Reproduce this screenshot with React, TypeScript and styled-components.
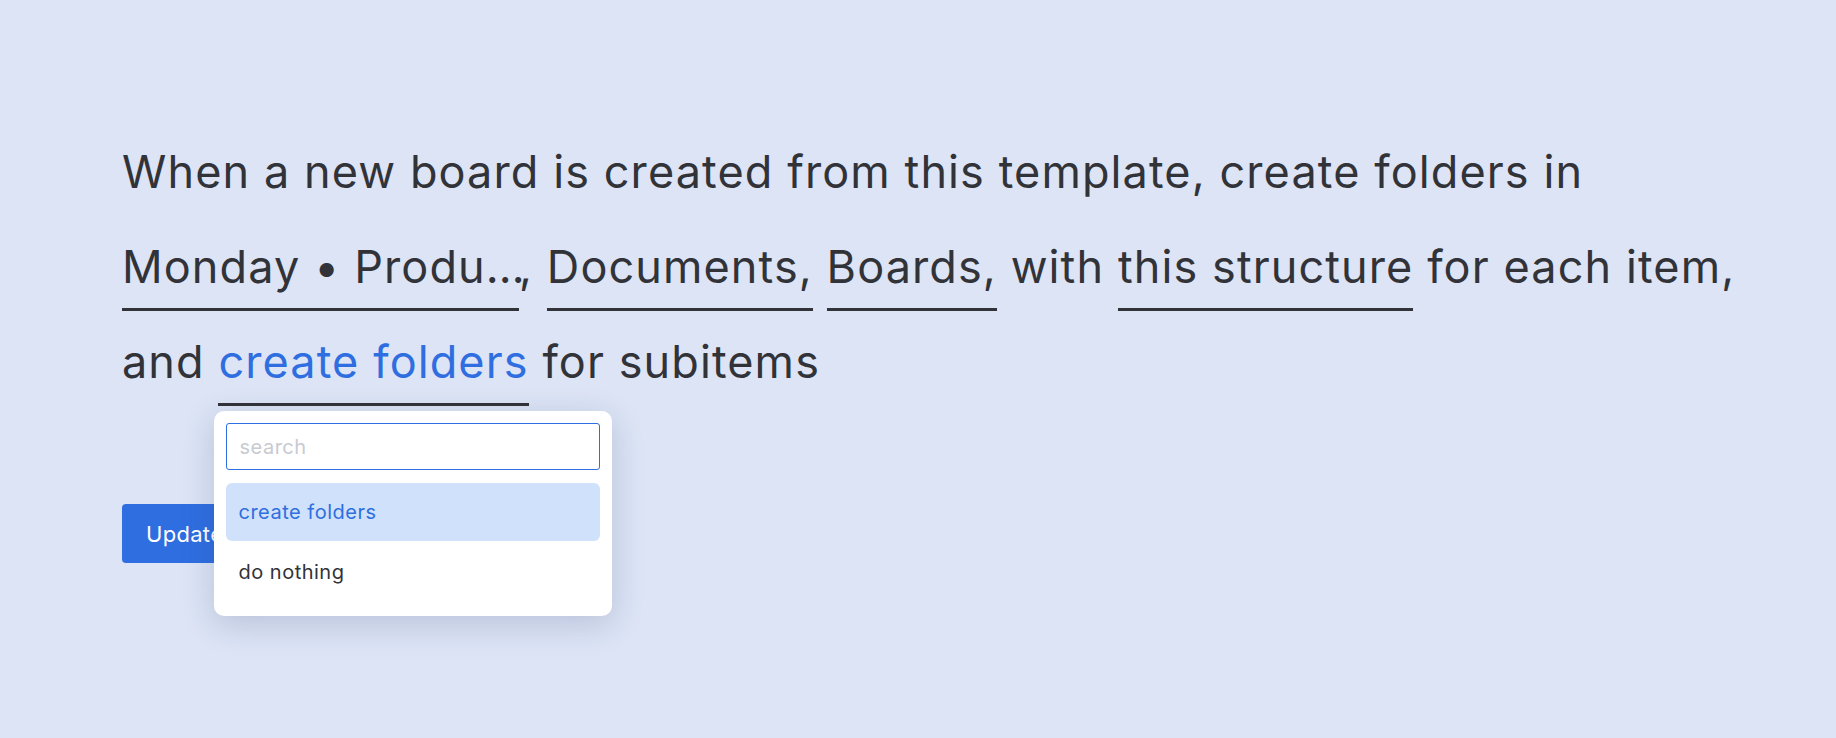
import React from "react";
import styled, { createGlobalStyle } from "styled-components";

const GlobalStyle = createGlobalStyle`
  html, body { margin: 0; padding: 0; background: #dce4f5; }
  body { font-family: "Inter", "Noto Sans", sans-serif; }
  * { box-sizing: border-box; }
`;

const Page = styled.main`
  min-height: 738px;
  padding: 124px 70px 0 122px;
  font-family: "Inter", "Noto Sans", sans-serif;
`;

const Sentence = styled.div`
  margin: 0;
  font-size: 45px;
  line-height: 95px;
  letter-spacing: 1.1px;
  color: #323338;
`;

const Field = styled.span<{ $width?: number; $accent?: boolean }>`
  position: relative;
  display: inline-block;
  line-height: 83px;
  white-space: nowrap;
  border-bottom: 3px solid #323338;
  color: ${(p) => (p.$accent ? "#2f6ee0" : "#323338")};
  ${(p) => (p.$width ? `width: ${p.$width}px;` : "")}
`;

const Actions = styled.div`
  margin-top: 95px;
  display: flex;
`;

const PrimaryButton = styled.button`
  height: 59px;
  padding: 0 24px;
  border: none;
  border-radius: 4px;
  background: #2f6ee0;
  color: #ffffff;
  font-family: "Inter", "Noto Sans", sans-serif;
  font-size: 22px;
  letter-spacing: 0.3px;
  cursor: pointer;
`;

const Dropdown = styled.div`
  position: absolute;
  left: -4px;
  top: calc(100% + 8px);
  z-index: 10;
  width: 398px;
  padding: 12px 12px 15px;
  display: flex;
  flex-direction: column;
  background: #ffffff;
  border-radius: 10px;
  box-shadow: 0 8px 32px rgba(40, 60, 110, 0.2);
  font-size: 20px;
  line-height: normal;
  letter-spacing: 0.5px;
  white-space: normal;
  color: #323338;
`;

const SearchInput = styled.input`
  height: 47px;
  width: 100%;
  padding: 0 12px;
  border: 1px solid #2f6ee0;
  border-radius: 3px;
  outline: none;
  font-family: "Inter", "Noto Sans", sans-serif;
  font-size: 20px;
  letter-spacing: 0.5px;
  color: #323338;
  background: #ffffff;
  &::placeholder {
    color: #c8cad2;
  }
`;

const OptionList = styled.div`
  margin-top: 13px;
  display: flex;
  flex-direction: column;
  gap: 2px;
`;

const Option = styled.div<{ $selected?: boolean }>`
  height: 58px;
  display: flex;
  align-items: center;
  padding: 0 12px;
  border-radius: 6px;
  background: ${(p) => (p.$selected ? "#cfe1fb" : "transparent")};
  color: ${(p) => (p.$selected ? "#2f6ee0" : "#323338")};
  cursor: pointer;
`;

export default function App() {
  return (
    <>
      <GlobalStyle />
      <Page>
        <Sentence>
          When a new board is created from this template, create folders in{" "}
          <Field $width={397}>Monday • Produ…</Field>, <Field>Documents,</Field>{" "}
          <Field>Boards,</Field> with <Field>this structure</Field> for each item, and{" "}
          <Field $accent>
            create folders
            <Dropdown>
              <SearchInput placeholder="search" />
              <OptionList>
                <Option $selected>create folders</Option>
                <Option>do nothing</Option>
              </OptionList>
            </Dropdown>
          </Field>{" "}
          for subitems
        </Sentence>
        <Actions>
          <PrimaryButton>Update</PrimaryButton>
        </Actions>
      </Page>
    </>
  );
}
